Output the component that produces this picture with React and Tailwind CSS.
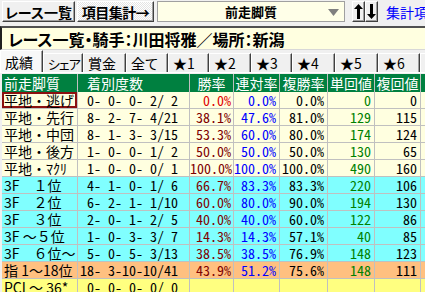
import React from "react";

const rows = [
  { n: "平地・逃げ", r: " 0- 0- 0- 2/ 2", w: "0.0%", p: "0.0%", s: "0.0%", t: "0", f: "0", bg: "bg-[#ffffe0]", sel: true },
  { n: "平地・先行", r: " 8- 2- 7- 4/21", w: "38.1%", p: "47.6%", s: "81.0%", t: "129", f: "115", bg: "bg-[#ffffe0]" },
  { n: "平地・中団", r: " 8- 1- 3- 3/15", w: "53.3%", p: "60.0%", s: "80.0%", t: "174", f: "124", bg: "bg-[#ffffe0]" },
  { n: "平地・後方", r: " 1- 0- 0- 1/ 2", w: "50.0%", p: "50.0%", s: "50.0%", t: "130", f: "65", bg: "bg-[#ffffe0]" },
  { n: "平地・ﾏｸﾘ", r: " 1- 0- 0- 0/ 1", w: "100.0%", p: "100.0%", s: "100.0%", t: "490", f: "160", bg: "bg-[#ffffe0]" },
  { n: "3F　１位", r: " 4- 1- 0- 1/ 6", w: "66.7%", p: "83.3%", s: "83.3%", t: "220", f: "106", bg: "bg-[#80ffff]" },
  { n: "3F　２位", r: " 6- 2- 1- 1/10", w: "60.0%", p: "80.0%", s: "90.0%", t: "194", f: "130", bg: "bg-[#80ffff]" },
  { n: "3F　３位", r: " 2- 0- 1- 2/ 5", w: "40.0%", p: "40.0%", s: "60.0%", t: "122", f: "86", bg: "bg-[#80ffff]" },
  { n: "3F ～５位", r: " 1- 0- 3- 3/ 7", w: "14.3%", p: "14.3%", s: "57.1%", t: "40", f: "85", bg: "bg-[#80ffff]" },
  { n: "3F　６位～", r: " 5- 0- 5- 3/13", w: "38.5%", p: "38.5%", s: "76.9%", t: "148", f: "123", bg: "bg-[#80ffff]" },
  { n: "指 1～18位", r: "18- 3-10-10/41", w: "43.9%", p: "51.2%", s: "75.6%", t: "148", f: "111", bg: "bg-[#ffc080]" },
  { n: "PCI ～ 36*", r: " 0- 0- 0- 0/ 0", w: "", p: "", s: "", t: "", f: "", bg: "bg-[#ffff80]" },
];

const tabs = [
  { l: "成績", w: "w-[43px] text-[14px]", sel: true },
  { l: "シェア", w: "w-[40px] text-[13px] tracking-[-1px]" },
  { l: "賞金", w: "w-[43px] text-[14px]" },
  { l: "全て", w: "w-[42px] text-[14px]" },
  { l: "★1", w: "w-[41px] text-[14px]" },
  { l: "★2", w: "w-[42px] text-[14px]" },
  { l: "★3", w: "w-[41px] text-[14px]" },
  { l: "★4", w: "w-[43px] text-[14px]" },
  { l: "★5", w: "w-[43px] text-[14px]" },
  { l: "★6", w: "w-[42px] text-[14px]" },
  { l: "★7", w: "w-[42px] text-[14px]" },
];

function UpArrow({ down }) {
  return (
    <svg width="9" height="15" viewBox="0 0 9 15" className={down ? "rotate-180" : ""}>
      <path d="M4.5 0 L9 5 L6 5 L6 15 L3 15 L3 5 L0 5 Z" fill="#000" />
    </svg>
  );
}

export default function App() {
  const cell = "border-r border-b border-[#c0c0c0] h-[17px] leading-[16px] whitespace-pre overflow-hidden";
  const num = "[font-feature-settings:'hwid']";
  return (
    <div className="w-[425px] h-[292px] overflow-hidden bg-[#f0f0f0] font-['Noto_Sans_CJK_JP',sans-serif] text-black">
      {/* top bar */}
      <div className="flex items-start h-[26px] pt-[1px] pl-[2px]">
        <div className="shrink-0 flex items-center justify-center w-[73px] h-[21px] border border-t-white border-l-white border-r-[#404040] border-b-[#404040] shadow-[inset_-1px_-1px_0_#a0a0a0] text-[14px] font-bold [font-feature-settings:'palt'] leading-none whitespace-nowrap">
          レース一覧
        </div>
        <div className="shrink-0 ml-[2px] flex items-center justify-center w-[77px] h-[21px] border border-t-white border-l-white border-r-[#404040] border-b-[#404040] shadow-[inset_-1px_-1px_0_#a0a0a0] bg-[repeating-conic-gradient(#ffffff_0_25%,#e4e4e4_0_50%)] bg-[length:2px_2px] text-[14px] font-bold leading-none whitespace-nowrap tracking-[-0.5px]">
          項目集計→
        </div>
        <div className="shrink-0 ml-[3px] relative flex items-center w-[188px] h-[21px] border border-[#a0a0a0] bg-[#ffffe8] pl-[67px] text-[13px] font-bold leading-none whitespace-nowrap">
          前走脚質
          <svg width="11" height="7" viewBox="0 0 11 7" className="absolute right-[5px] top-[7px]">
            <path d="M0 0 H11 L5.5 7 Z" fill="#808080" />
          </svg>
        </div>
        <div className="shrink-0 ml-[7px] flex items-center justify-center w-[13px] h-[21px] border border-t-white border-l-white border-r-[#404040] border-b-[#404040] shadow-[inset_-1px_-1px_0_#a0a0a0]">
          <UpArrow />
        </div>
        <div className="shrink-0 flex items-center justify-center w-[13px] h-[21px] border border-t-white border-l-white border-r-[#404040] border-b-[#404040] shadow-[inset_-1px_-1px_0_#a0a0a0]">
          <UpArrow down />
        </div>
        <div className="shrink-0 ml-[8px] h-[21px] flex items-center text-[14px] text-[#0000ff] whitespace-nowrap leading-none">
          集計項目
        </div>
      </div>

      {/* title */}
      <div className="h-[24px] border-t-2 border-l-2 border-t-[#505050] border-l-[#202020] border-b border-b-[#d8d8d8] bg-[#ffffe0] flex items-center pl-[6px] text-[16px] font-bold leading-none whitespace-nowrap [font-feature-settings:'palt']">
        レース一覧・騎手：川田将雅／場所：新潟
      </div>

      {/* tabs */}
      <div className="flex items-end h-[23px] border-b border-white">
        {tabs.map((t) => (
          <div
            key={t.l}
            className={`${t.w} shrink-0 flex items-center pl-[4px] border-t border-l border-r border-t-white border-l-white border-r-[#404040] shadow-[inset_-1px_0_0_#a0a0a0] leading-none whitespace-nowrap overflow-hidden [font-feature-settings:'palt'] ${t.sel ? "h-[22px] bg-[#f8f8f8]" : "h-[19px] bg-[#f0f0f0]"}`}
          >
            {t.l}
          </div>
        ))}
      </div>

      {/* table */}
      <div className="pl-[2px] pt-[1px] text-[14px]">
        <div className="grid grid-cols-[76px_112px_44px_46px_48px_47px_46px_60px]">
          <div className="h-[18px] leading-[18px] bg-[#008040] text-white border-r border-[#c0c0c0] pl-[2px]">前走脚質</div>
          <div className="h-[18px] leading-[18px] bg-[#008040] text-white border-r border-[#c0c0c0] pl-[9px]">着別度数</div>
          <div className="h-[18px] leading-[18px] bg-[#008040] text-white border-r border-[#c0c0c0] text-center">勝率</div>
          <div className="h-[18px] leading-[18px] bg-[#008040] text-white border-r border-[#c0c0c0] text-center">連対率</div>
          <div className="h-[18px] leading-[18px] bg-[#008040] text-white border-r border-[#c0c0c0] text-center">複勝率</div>
          <div className="h-[18px] leading-[18px] bg-[#008040] text-white border-r border-[#c0c0c0] text-center">単回値</div>
          <div className="h-[18px] leading-[18px] bg-[#008040] text-white border-r border-[#c0c0c0] text-center">複回値</div>
          <div className="h-[18px] leading-[18px] bg-[#008040] text-white border-r border-[#c0c0c0]"></div>
          {rows.map((r, i) => (
            <React.Fragment key={i}>
              <div className={`${cell} ${r.bg} pl-[2px] ${r.sel ? "shadow-[inset_0_0_0_2px_#8b1010]" : ""}`}>{r.n}</div>
              <div className={`${cell} ${r.bg} ${num} pl-[2px]`}>{r.r}</div>
              <div className={`${cell} ${r.bg} ${num} text-right pr-[2px] ${r.sel ? "text-[#e00000]" : "text-[#800000]"}`}>{r.w}</div>
              <div className={`${cell} ${r.bg} ${num} text-right pr-[3px] text-[#0000ff]`}>{r.p}</div>
              <div className={`${cell} ${r.bg} ${num} text-right pr-[3px]`}>{r.s}</div>
              <div className={`${cell} ${r.bg} ${num} text-right pr-[3px] text-[#008000]`}>{r.t}</div>
              <div className={`${cell} ${r.bg} ${num} text-right pr-[3px]`}>{r.f}</div>
              <div className={`${cell} ${r.bg}`}></div>
            </React.Fragment>
          ))}
        </div>
      </div>
    </div>
  );
}
